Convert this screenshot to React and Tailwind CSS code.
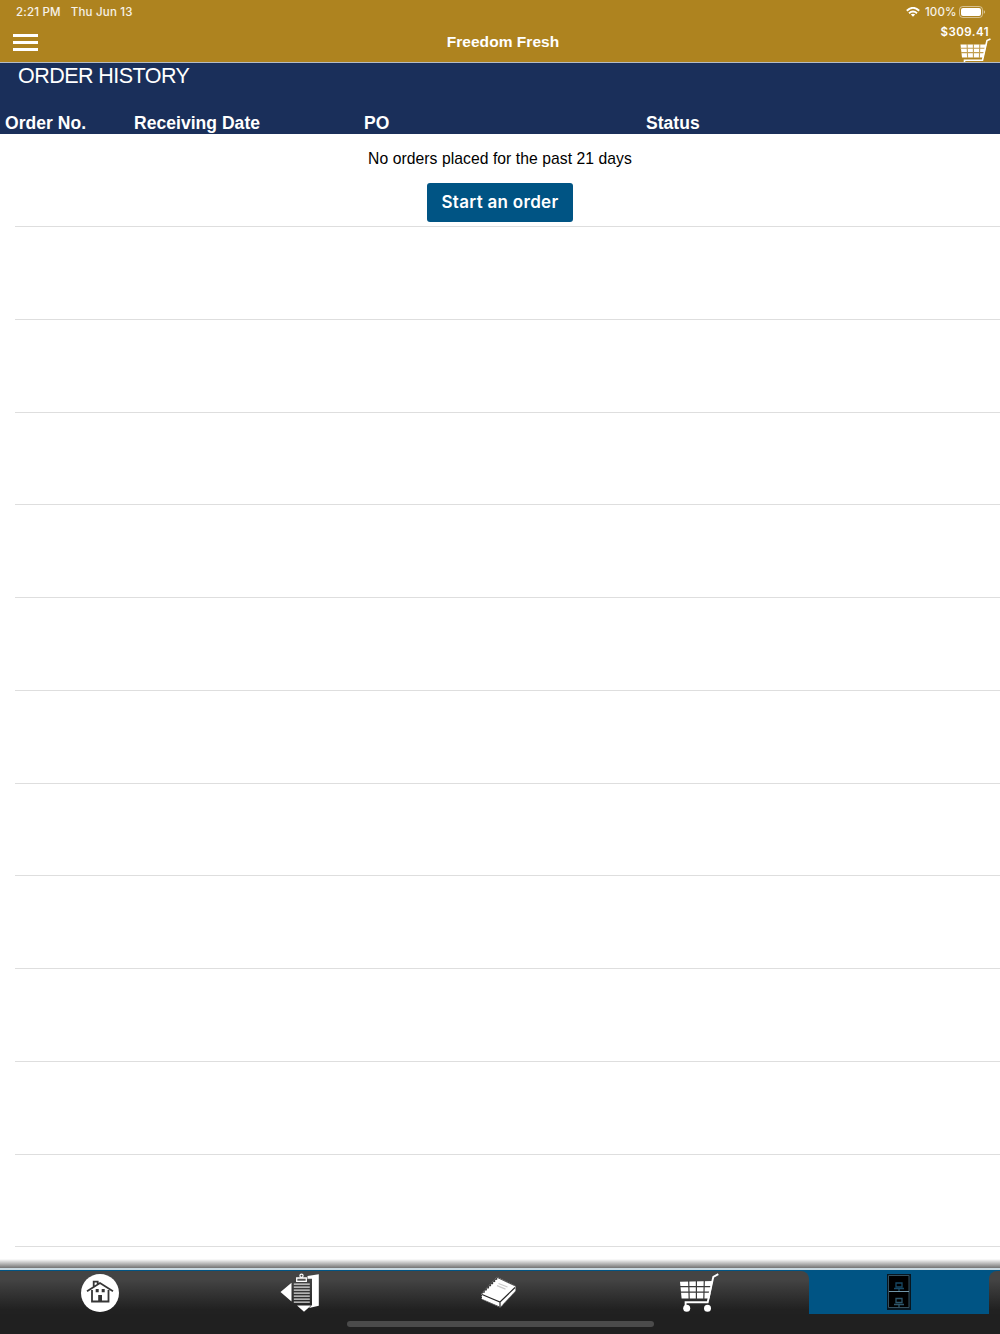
import React from 'react';

const rows = Array.from({ length: 11 }, (_, i) => i);

const CartIcon = ({ className }) => (
  <svg className={className} viewBox="0 0 40 40" fill="none">
    <path d="M1 8.8L33.8 8L30.5 25.5H2.6Z" fill="#fff" />
    <path d="M0 13.6H33M1 19.1H32M9.7 8L10.2 26.5M17.4 8V26.5M25.3 7.5L24.8 26.5" stroke="#3a3a3a" strokeWidth="1.2" />
    <path d="M39.3 1.2L34.3 3.9L28.7 29.3H6.6V33" stroke="#fff" strokeWidth="1.9" />
    <circle cx="7.7" cy="35.3" r="3.5" fill="#fff" />
    <circle cx="28.5" cy="35.3" r="3.5" fill="#fff" />
  </svg>
);

const HeaderCartIcon = () => (
  <svg className="block" width="31" height="24" viewBox="0 0 31 24" fill="none">
    <path d="M.5 6.5H26.5L23.5 19.5H2Z" fill="#fff" />
    <path d="M0 10.2H26M1 14.6H25M7.1 6L7.6 20M13.4 6V20M19.8 6L19.4 20" stroke="#c29f50" strokeWidth="1.1" />
    <path d="M30.5 1L27 2.6L22.5 22.2H4.5V24" stroke="#fff" strokeWidth="1.6" />
  </svg>
);

const HomeIcon = () => (
  <svg width="40" height="40" viewBox="0 0 40 40" fill="none">
    <circle cx="20" cy="20" r="19" fill="#fff" />
    <path d="M7 18.2L20 10L33 18.2M12 17V28.5H28.5V17M13.7 14V8.7H17.7V12" stroke="#363636" strokeWidth="1.8" />
    <path d="M15.7 16H18.7V19.2H15.7ZM21.7 16H24.7V19.2H21.7ZM18.2 22H22V28.5H18.2Z" fill="#363636" />
  </svg>
);

const ClipboardIcon = () => (
  <svg width="40" height="40" viewBox="0 0 40 40" fill="none">
    <path d="M.5 19L11.5 9.7V28.5ZM17 32.5H31L24 38.7Z" fill="#fff" />
    <path d="M27.5 3L38.8 1.2V32.7L29 35L32 32V5.8H27.5Z" fill="#fff" />
    <path d="M13.8 11.2H29.8M13.8 14.2H29.8M13.8 17.2H29.8M13.8 20.2H29.8M13.8 23.2H29.8M13.8 26.2H29.8M13.8 29.2H29.8" stroke="#ddd" strokeWidth="1.2" />
    <path d="M16.7 5H26.3V8.3H16.7Z" stroke="#fff" strokeWidth="1.3" fill="#555" />
    <circle cx="21.5" cy="2.7" r="1.6" stroke="#fff" strokeWidth="1.2" />
  </svg>
);

const BookIcon = () => (
  <svg width="40" height="40" viewBox="0 0 40 40" fill="none">
    <path d="M3 21L18.5 5L36.5 13.5V18L21.5 34L3 26Z" fill="#fff" />
    <path d="M3 21.5L21 29L36 14.5M21 29V34" stroke="#292929" strokeWidth="1.2" />
    <path d="M4.5 19.5L18.5 5" stroke="#333" strokeWidth="1.5" strokeDasharray="1.5 1.5" />
    <path d="M2.5 20.5L18 4L36.5 13M2.5 21V26L21.5 34.5L36.5 18" stroke="#999" strokeWidth=".7" strokeDasharray="1 1" />
    <path d="M19.5 10.5L28.5 14M18 12.7L26.5 16.2" stroke="#ccc" strokeWidth="1.3" />
  </svg>
);

const CabinetIcon = () => (
  <svg width="24" height="36" viewBox="0 0 24 36" fill="none">
    <path d="M0 0H24V36H0Z" fill="#071620" />
    <path d="M1.5 1.5H22V33.5H1.5Z" fill="#000" stroke="#34505f" />
    <path d="M2 17.5H22" stroke="#7195a8" />
    <path d="M9 9H15V13H9Z" stroke="#174864" strokeWidth="1.3" />
    <path d="M7 14.5H17M12 15V17" stroke="#174864" strokeWidth="1.3" />
    <path d="M9 24.5H15V28.5H9ZM7 30.5H17M12 30V33" stroke="#2d566b" strokeWidth="1.3" />
  </svg>
);

const StatusBar = () => (
  <div className="flex h-6 items-center justify-between pl-4 pr-[15px] font-['Inter'] text-[11.5px] font-medium leading-6 text-white/90">
    <div className="flex gap-[10px]">
      <span className="tracking-[0.2px]">2:21 PM</span>
      <span className="tracking-[0.2px]">Thu Jun 13</span>
    </div>
    <div className="flex items-center">
      <svg width="14" height="10" viewBox="0 0 14 10" fill="none" stroke="#fff" strokeWidth="1.9">
        <path d="M.8 3.7Q7-2 13.2 3.7M3 6.2Q7 2.7 11 6.2" />
        <path d="M4.8 7.5Q7 5.8 9.2 7.5L7 9.8Z" fill="#fff" stroke="none" />
      </svg>
      <span className="ml-[5px] w-[31px] whitespace-nowrap tracking-[0.1px]">100%</span>
      <svg className="ml-[3px]" width="26" height="12" viewBox="0 0 26 12" fill="none">
        <rect x=".5" y=".5" width="23" height="11" rx="3.2" stroke="#fff" strokeOpacity=".5" />
        <rect x="2" y="2" width="20" height="8" rx="2" fill="#fff" />
        <path d="M24.8 4V8Q26 7.2 26 6T24.8 4Z" fill="#fff" fillOpacity=".6" />
      </svg>
    </div>
  </div>
);

const App = () => {
  return (
    <div className="flex h-[1334px] w-[1000px] flex-col overflow-hidden bg-white font-['Liberation_Sans',sans-serif]">
      <header className="h-[63px] shrink-0 border-b border-[#b5bcc4] bg-[#ae831f] text-white">
        <StatusBar />
        <div className="grid h-[38px] grid-cols-3">
          <div className="flex flex-col gap-[4px] pl-[13px] pt-[10px]">
            <span className="h-[3px] w-[25px] bg-white" />
            <span className="h-[3px] w-[25px] bg-white" />
            <span className="h-[3px] w-[25px] bg-white" />
          </div>
          <h1 className="pl-[6px] pt-2 text-center text-[15.5px] font-bold leading-5 tracking-[0.05px]">
            Freedom Fresh
          </h1>
          <div className="flex flex-col items-end">
            <span className="h-[14px] pr-[11px] font-['Inter'] text-[11.5px] font-semibold leading-4 tracking-[0.45px]">$309.41</span>
            <div className="mr-[9px] h-6">
              <HeaderCartIcon />
            </div>
          </div>
        </div>
      </header>

      <section className="h-[71px] shrink-0 bg-[#1a2f5a] text-white">
        <h2 className="h-[49px] pl-[18px] text-[21.5px] leading-[27px] tracking-[-0.55px]">ORDER HISTORY</h2>
        <div className="grid grid-cols-[129px_230px_282px_1fr] pl-[5px] text-[17.5px] font-bold leading-[23px] tracking-[0.04px]">
          <span>Order No.</span>
          <span>Receiving Date</span>
          <span>PO</span>
          <span>Status</span>
        </div>
      </section>

      <main className="relative flex-1 overflow-hidden pt-[0.6px]">
        {rows.map((row) => (
          <div key={row} className="h-[92.73px]">
            <div className="ml-[15px] flex h-full flex-col items-center border-b border-[#dedede] pr-[15px]">
              {row === 0 && (
                <>
                  <p className="mt-[13.4px] text-[15.7px] leading-[22px] tracking-[0.06px] text-black">No orders placed for the past 21 days</p>
                  <button className="mt-[13px] h-[39px] w-[146px] shrink-0 rounded-[3px] bg-[#005484] pt-px font-['Inter'] text-[17px] font-semibold tracking-[0.3px] text-white">
                    Start an order
                  </button>
                </>
              )}
            </div>
          </div>
        ))}
        <div className="ml-[15px] h-[92.73px] border-b border-[#dedede]" />
        <div className="absolute inset-x-0 bottom-0 h-[9px] bg-linear-to-b from-black/0 to-black/55" />
      </main>

      <footer className="h-[66px] shrink-0 border-t-2 border-[#c9d8e0] bg-[#202020]">
        <div className="flex h-11 bg-[#005484]">
          <nav className="mt-px flex w-[809px] rounded-tr-[8px] bg-linear-to-b from-[#444] from-20% to-[#212121] to-90%">
            <div className="flex w-[199px] justify-center pt-[2px]"><HomeIcon /></div>
            <div className="flex w-[201px] justify-center pt-[2px]"><ClipboardIcon /></div>
            <div className="flex w-[198px] justify-center pt-[2px]"><BookIcon /></div>
            <div className="flex w-[202px] justify-center pt-[2px]"><CartIcon className="h-10 w-10" /></div>
          </nav>
          <div className="flex w-[180px] justify-center pt-[4px]"><CabinetIcon /></div>
          <div className="mt-px w-[11px] rounded-tl-[8px] bg-linear-to-b from-[#444] from-20% to-[#212121] to-90%" />
        </div>
        <div className="mx-auto mt-[7px] h-[6px] w-[307px] rounded-full bg-[#4b4b4b]" />
      </footer>
    </div>
  );
};

export default App;
